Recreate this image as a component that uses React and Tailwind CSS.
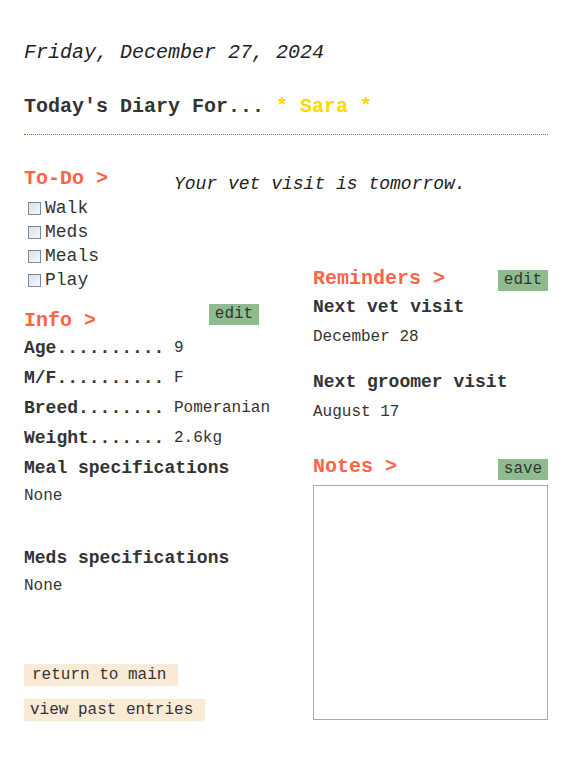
import React from 'react';

function Check({ label }) {
  return (
    <label className="flex items-center h-[24px] text-[18px]">
      <span className="ml-[4px] mr-[4px] w-[13px] h-[13px] border border-[#7d8b9a] bg-gradient-to-br from-[#d6e0ea] to-[#f6f9fc]" />
      {label}
    </label>
  );
}

function Field({ label, value }) {
  return (
    <div className="flex items-center h-[30px]">
      <span className="w-[150px] shrink-0 text-[18px] font-bold leading-[30px]">{label}</span>
      <span className="text-[16px] leading-[30px] whitespace-nowrap">{value}</span>
    </div>
  );
}

function SmallBtn({ children }) {
  return (
    <button className="block h-[21px] w-[50px] bg-[#8fbc8f] text-[16px] leading-[21px] text-[#333] text-center">
      {children}
    </button>
  );
}

export default function App() {
  const todos = ["Walk", "Meds", "Meals", "Play"];

  return (
    <div className="min-h-screen bg-white px-6 pt-[40px] text-[#333] font-['Liberation_Mono','Courier_New',monospace]">
      {/* Header */}
      <div className="text-[20px] italic leading-[26px] text-[#222]">Friday, December 27, 2024</div>
      <div className="mt-7 text-[20px] font-bold leading-[26px]">
        Today's Diary For... <span className="text-[#ffd700]">* Sara *</span>
      </div>
      <div className="mt-[14px] w-[524px] border-b border-dotted border-[#9a6a2a]" />

      {/* To-Do row */}
      <div className="mt-[31px] flex items-start">
        <div className="w-[150px] text-[20px] font-bold leading-[26px] text-[#ff6347]">To-Do &gt;</div>
        <div className="mt-[6px] text-[18px] italic leading-[24px] text-[#222]">Your vet visit is tomorrow.</div>
      </div>

      <div className="flex gap-[54px]">
        {/* Left column */}
        <div className="w-[235px]">
          {todos.map((t) => (
            <Check key={t} label={t} />
          ))}

          <div className="mt-[12px] flex justify-between items-start">
            <div className="mt-[5px] text-[20px] font-bold leading-[24px] text-[#ff6347]">Info &gt;</div>
            <SmallBtn>edit</SmallBtn>
          </div>

          <Field label="Age.........." value="9" />
          <Field label="M/F.........." value="F" />
          <Field label="Breed........" value="Pomeranian" />
          <Field label="Weight......." value="2.6kg" />

          <div className="text-[18px] font-bold leading-[30px]">Meal specifications</div>
          <div className="text-[16px] leading-[26px]">None</div>

          <div className="mt-[34px] text-[18px] font-bold leading-[30px]">Meds specifications</div>
          <div className="text-[16px] leading-[26px]">None</div>

          <div className="mt-[65px] flex flex-col items-start gap-[13px]">
            <button className="block h-[22px] w-[154px] pl-2 text-left bg-[#faebd7] text-[16px] leading-[22px] text-[#333]">return to main</button>
            <button className="block h-[22px] w-[181px] pl-[6px] text-left bg-[#faebd7] text-[16px] leading-[22px] text-[#333]">view past entries</button>
          </div>
        </div>

        {/* Right column */}
        <div className="w-[235px] mt-[70px]">
          <div className="flex justify-between items-start">
            <div className="text-[20px] font-bold leading-[26px] text-[#ff6347]">Reminders &gt;</div>
            <div className="mt-[4px]">
              <SmallBtn>edit</SmallBtn>
            </div>
          </div>

          <div className="text-[18px] font-bold leading-[30px]">Next vet visit</div>
          <div className="text-[16px] leading-[30px]">December 28</div>
          <div className="mt-[15px] text-[18px] font-bold leading-[30px]">Next groomer visit</div>
          <div className="text-[16px] leading-[30px]">August 17</div>

          <div className="mt-[27px] flex justify-between items-start">
            <div className="text-[20px] font-bold leading-[26px] text-[#ff6347]">Notes &gt;</div>
            <div className="mt-[5px]">
              <SmallBtn>save</SmallBtn>
            </div>
          </div>
          <textarea className="mt-[5px] block h-[235px] w-[235px] resize-none border border-[#aaa] bg-white outline-none" />
        </div>
      </div>
    </div>
  );
}
